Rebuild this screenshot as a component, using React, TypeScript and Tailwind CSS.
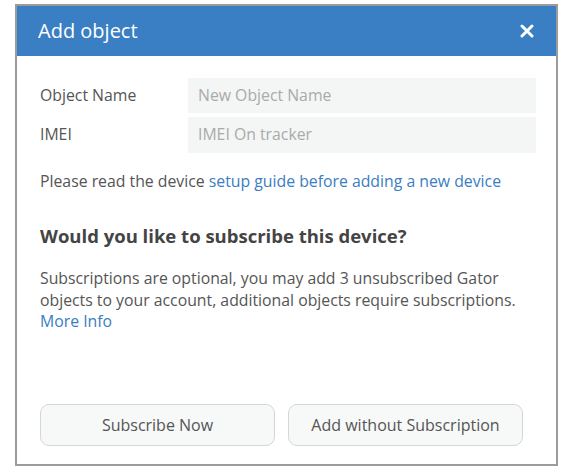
import React from "react";

export default function App() {
  return (
    <div className="w-[575px] h-[472px] bg-white pt-[4px] pl-[15px]" style={{ fontFamily: '"Open Sans", "Liberation Sans", sans-serif' }}>
      <div className="w-[543px] h-[462px] border-2 border-[#9b9b9b] flex flex-col bg-white">
        <div className="h-[50px] bg-[#3a7ec3] flex items-center justify-between pl-[21px] pr-[21px]">
          <span className="text-white text-[20px] leading-none">Add object</span>
          <svg width="14" height="14" viewBox="0 0 14 14" className="mr-[1px]">
            <path d="M2 2 L12 12 M12 2 L2 12" stroke="white" strokeWidth="3" strokeLinecap="round" />
          </svg>
        </div>
        <div className="flex flex-col flex-1 pl-[23px] pr-[20px] pt-[22px] pb-[18px] text-[#555] text-[15.8px]">
          <div className="grid grid-cols-[148px_1fr] gap-y-[4px] items-center">
            <span className="text-[#555]">Object Name</span>
            <div className="h-[35px] bg-[#f4f5f5] flex items-center pl-[10px] text-[#aaa]">New Object Name</div>
            <span className="text-[#555]">IMEI</span>
            <div className="h-[36px] bg-[#f4f5f5] flex items-center pl-[10px] text-[#aaa]">IMEI On tracker</div>
          </div>
          <p className="mt-[18px] leading-[21px]">
            Please read the device <span className="text-[#3a7ec3]">setup guide before adding a new device</span>
          </p>
          <h2 className="mt-[32px] text-[18.5px] font-bold leading-[24px] text-[#444]">Would you like to subscribe this device?</h2>
          <p className="mt-[20px] leading-[21.5px]">
            Subscriptions are optional, you may add 3 unsubscribed Gator
            <br />
            objects to your account, additional objects require subscriptions.
            <br />
            <span className="text-[#3a7ec3]">More Info</span>
          </p>
          <div className="mt-auto flex gap-[13px]">
            <button className="w-[235px] h-[42px] rounded-[9px] border border-[#d6d6d6] bg-[#f7f8f8] text-[#555] text-[16px]">Subscribe Now</button>
            <button className="w-[235px] h-[42px] rounded-[9px] border border-[#d6d6d6] bg-[#f7f8f8] text-[#555] text-[16px]">Add without Subscription</button>
          </div>
        </div>
      </div>
    </div>
  );
}
